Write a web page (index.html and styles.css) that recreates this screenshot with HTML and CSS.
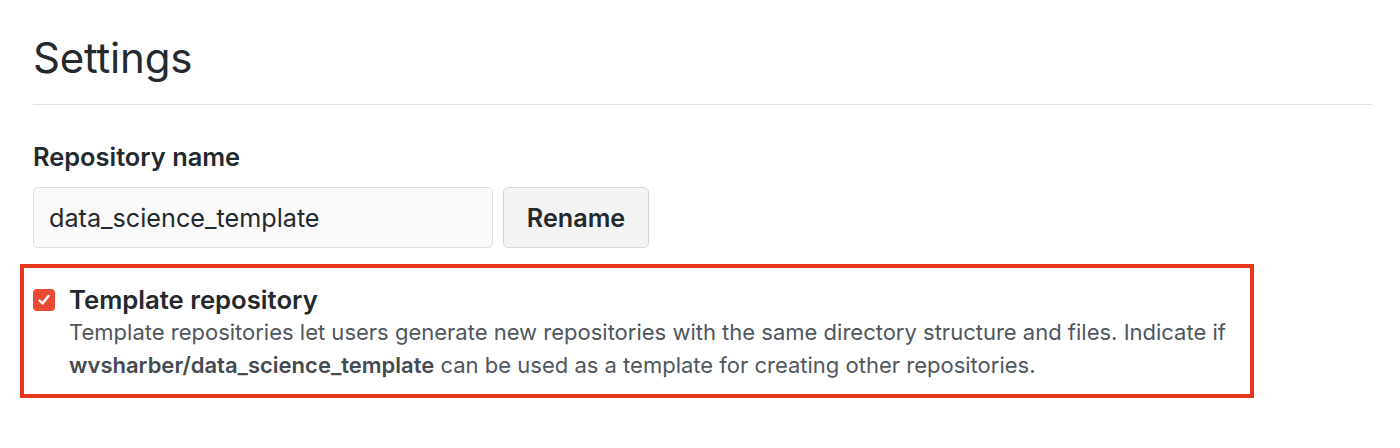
FILE: index.html
```html
<!DOCTYPE html>
<html>
<head>
<meta charset="utf-8">
<link rel="stylesheet" href="styles.css">
</head>
<body>
<main class="page">
  <h2 class="title">Settings</h2>
  <section class="field">
    <label class="label">Repository name</label>
    <div class="row">
      <div class="input">data_science_template</div>
      <button class="btn">Rename</button>
    </div>
  </section>
  <section class="highlight">
    <div class="check-row">
      <span class="checkbox">
        <svg width="14" height="14" viewBox="0 0 14 14"><path d="M2.5 7.5 L5.5 10.5 L11.5 3" fill="none" stroke="#fff" stroke-width="2.4" stroke-linecap="round" stroke-linejoin="round"/></svg>
      </span>
      <div class="check-text">
        <div class="check-title">Template repository</div>
        <p class="check-desc">Template repositories let users generate new repositories with the same directory structure and files. Indicate if <strong>wvsharber/data_science_template</strong> can be used as a template for creating other repositories.</p>
      </div>
    </div>
  </section>
</main>
</body>
</html>
```
FILE: styles.css
```css
html, body { margin: 0; padding: 0; background: #fff; }
body { font-family: Inter, "Noto Sans", "Liberation Sans", sans-serif; color: #24292e; }
.page { padding: 28px 28px 0 33px; width: 1339px; }
.title {
  margin: 0;
  font-size: 42px;
  font-weight: 400;
  line-height: 60px;
  padding-bottom: 16px;
  border-bottom: 1px solid #e4e0e0;
  letter-spacing: -0.2px;
}
.field { margin-top: 36px; }
.label { display: block; font-size: 25.4px; font-weight: 600; line-height: 32px; }
.row { display: flex; gap: 10px; margin-top: 14px; }
.input {
  box-sizing: border-box;
  width: 460px; height: 61px;
  padding: 0 15px;
  display: flex; align-items: center;
  font-size: 25.2px;
  background: #fafafa;
  border: 1.5px solid #e3dada;
  border-radius: 5px;
}
.btn {
  box-sizing: border-box;
  width: 146px; height: 61px;
  font-family: inherit;
  font-size: 25.2px; font-weight: 600; color: #24292e;
  background: #f4f3f3;
  border: 1.5px solid #dcd5d5;
  border-radius: 5px;
  padding: 0;
}
.highlight {
  box-sizing: border-box;
  margin: 16px 0 0 -13px;
  width: 1234px; height: 134px;
  border: 4px solid #e8351e;
  padding: 16px 0 0 9px;
}
.check-row { display: flex; gap: 14px; align-items: flex-start; }
.checkbox {
  flex: none;
  width: 22px; height: 22px;
  margin-top: 5px;
  background: #ea4a34;
  border-radius: 4px;
  display: flex; align-items: center; justify-content: center;
}
.check-title { font-size: 25.7px; font-weight: 600; line-height: 32px; }
.check-desc { margin: 0; font-size: 22px; line-height: 33px; color: #50565d; }
.check-desc strong { font-weight: 600; color: #444a50; }
```
